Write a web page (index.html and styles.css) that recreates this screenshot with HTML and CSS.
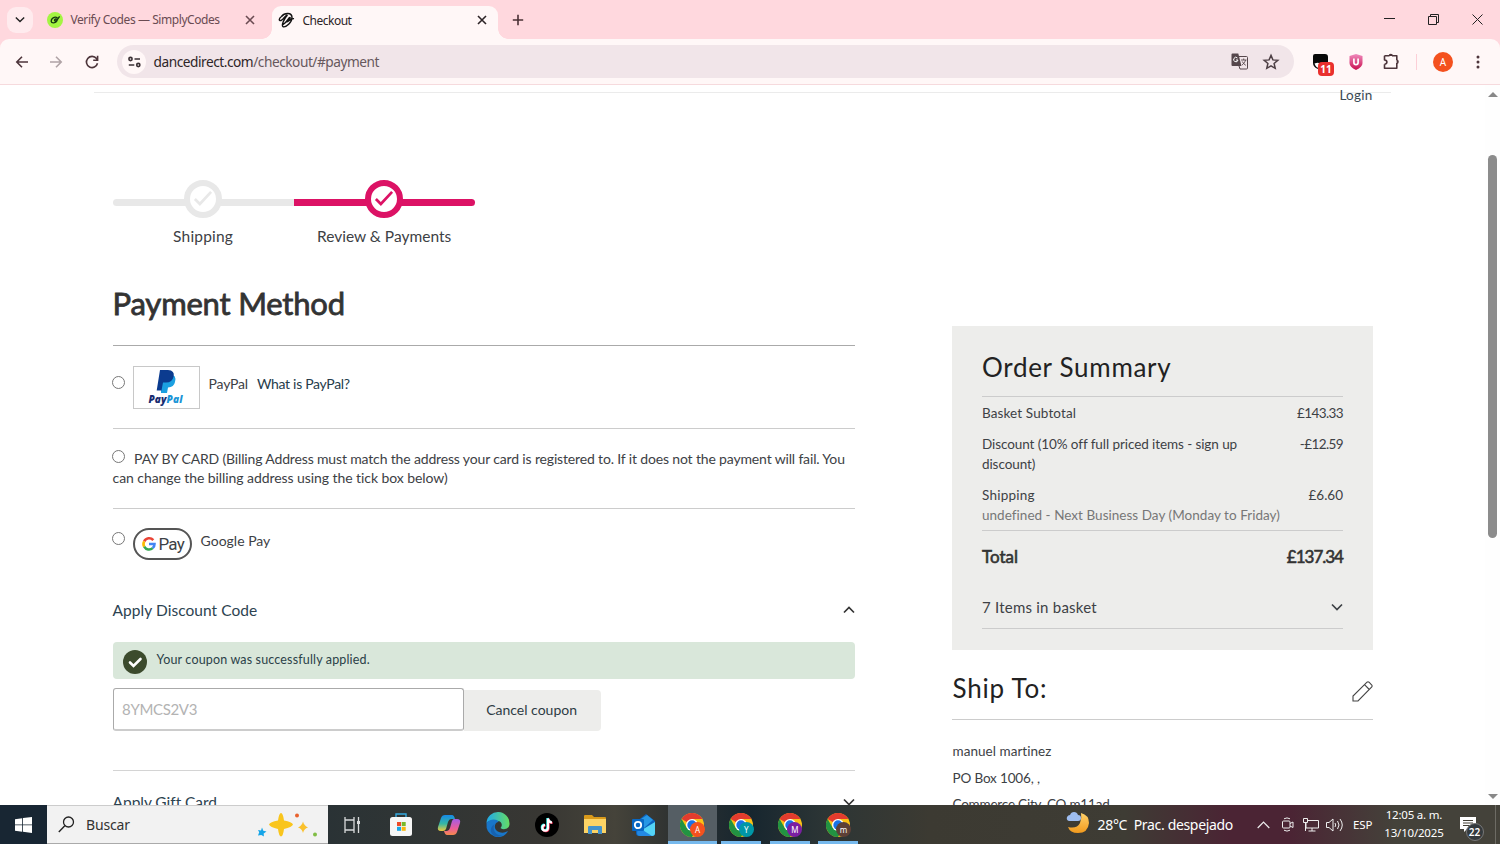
FILE: index.html
```html
<!DOCTYPE html>
<html lang="en">
<head>
<meta charset="utf-8">
<title>Checkout</title>
<link rel="stylesheet" href="styles.css">
</head>
<body>
<svg class="defs" width="0" height="0">
  <symbol id="chrome" viewBox="0 0 24 24">
    <circle cx="12" cy="12" r="12" fill="#fbc116"/>
    <path d="M12 12 1.6 6A12 12 0 0 1 22.4 6H12z" fill="#e33b2e"/>
    <path d="M1.6 6A12 12 0 0 0 12 24l5.2-9L12 12 6.8 15z" fill="#229342"/>
    <circle cx="12" cy="12" r="6" fill="#fff"/>
    <circle cx="12" cy="12" r="4.7" fill="#1a73e8"/>
  </symbol>
  <symbol id="close" viewBox="0 0 10 10"><path d="M1 1 9 9M9 1 1 9" fill="none" stroke="currentColor" stroke-width="1.6"/></symbol>
  <symbol id="down" viewBox="0 0 12 8"><path d="M1 1.5 6 6.5 11 1.5" fill="none" stroke="currentColor" stroke-width="1.7"/></symbol>
</svg>

<header class="tabs">
  <div class="tab-search"><svg width="10" height="7"><use href="#down"/></svg></div>
  <div class="tab tab-idle">
    <svg width="16" height="16" viewBox="0 0 16 16"><circle cx="8" cy="8" r="8" fill="#a4f542"/><path d="M10.500 5.800C7.500 4 4 6.500 4.200 9.200c.2 2.400 4.600 2.200 5.800-.5.600-1.700-1.600-2.200-2.400-.8-.5 1.300 1.400 1.500 2.400.3L12.600 4.400" fill="none" stroke="#173a12" stroke-width="1.400"/></svg>
    <span class="tab-title codes">Verify Codes — SimplyCodes</span>
    <svg class="tab-x" width="10" height="10"><use href="#close"/></svg>
  </div>
  <div class="tab tab-active">
    <svg width="17" height="17" viewBox="0 0 17 17"><path d="M3.500 4.500C6.500.5 14 .2 14 5.500c0 5-6 10-8.800 9.300C2.800 14 6 6.500 9.500 3M3.500 4.500C.5 6.500.8 9.200 3 8.500c3-1 3.500-5 6.500-5.500M5 12.500c4-1.500 5.500-7.500 7-7 1 1-1.500 3.500-4.500 4.500 3.500.5 5-4 8.500-3.300" fill="none" stroke="#111" stroke-width="1.400"/></svg>
    <span class="tab-title">Checkout</span>
    <svg class="tab-x" width="10" height="10"><use href="#close"/></svg>
  </div>
  <svg class="new-tab" width="12" height="12" viewBox="0 0 12 12"><path d="M6 .8v10.400M.8 6h10.400" stroke="#4a3035" stroke-width="1.600"/></svg>
  <div class="win">
    <svg width="11" height="11" viewBox="0 0 11 11"><path d="M0 4.500h11" stroke="#222"/></svg>
    <svg width="11" height="11" viewBox="0 0 11 11"><path d="M.5 2.500h8v8h-8zM2.500 2.500v-2h8v8h-2" fill="none" stroke="#222"/></svg>
    <svg width="11" height="11" viewBox="0 0 11 11"><path d="M.5.5l10 10M10.500.5l-10 10" stroke="#222"/></svg>
  </div>
</header>

<div class="toolbar-wrap">
<nav class="toolbar">
  <svg class="nav" width="14" height="14" viewBox="0 0 14 14"><path d="M13 7H2M7 1.800 1.800 7 7 12.200" fill="none" stroke="#4d353b" stroke-width="1.600"/></svg>
  <svg class="nav fwd" width="14" height="14" viewBox="0 0 14 14"><path d="M1 7h11M7 1.800 12.200 7 7 12.200" fill="none" stroke="#b0a3a6" stroke-width="1.600"/></svg>
  <svg class="nav reload" width="14" height="14" viewBox="0 0 14 14"><path d="M12.500 8.300A5.600 5.600 0 1 1 11.500 3.600L12.500 5M12.600.8V5.200H8.200" fill="none" stroke="#4d353b" stroke-width="1.600"/></svg>
  <div class="omni">
    <span class="site"><svg width="13" height="12" viewBox="0 0 13 12"><g fill="none" stroke="#3a3034" stroke-width="1.600"><circle cx="2.500" cy="3" r="1.600"/><path d="M6.500 3H12M.8 9h5.500"/><circle cx="10.300" cy="9" r="1.600"/></g></svg></span>
    <span class="url"><b>dancedirect.com</b>/checkout/#payment</span>
    <svg class="translate" width="17" height="17" viewBox="0 0 17 17"><path d="M1.500.5h5.800l3.200 12.500h-9a1 1 0 0 1-1-1V1.500a1 1 0 0 1 1-1z" fill="#56474c"/><path d="M8 3.500h7.500a1 1 0 0 1 1 1V15a1 1 0 0 1-1 1H9l-1-3" fill="none" stroke="#56474c"/><path d="M10 7h5.500M12.700 5.500V7M14.500 7c-.4 2-2 4-3.500 5M11.300 8.500c.7 1.700 2 3 3.500 3.800" fill="none" stroke="#56474c" stroke-width=".9"/><path d="M6.400 5A2.200 2.200 0 1 0 7 7H5" fill="none" stroke="#fff"/></svg>
    <svg class="star" width="16" height="16" viewBox="0 0 16 16"><path d="M8 1.400 9.900 5.900l4.900.4-3.700 3.200 1.100 4.800L8 11.800l-4.200 2.500 1.100-4.800L1.200 6.300l4.900-.4z" fill="none" stroke="#4d3f44" stroke-width="1.500"/></svg>
  </div>
  <div class="ext"><svg width="17" height="16" viewBox="0 0 17 16"><path d="M3 0h10q3 0 3 3v6H7L6 15Q1 13 1 9V2Q1 0 3 0z" fill="#090909"/><path d="M2.500 9.500q4-1.500 5 0V14Q4 14 2.500 9.500z" fill="#fff"/></svg><span class="count">11</span></div>
  <svg class="shield" width="14" height="16" viewBox="0 0 14 16"><defs><linearGradient id="sg" x2="0" y2="1"><stop stop-color="#f08abd"/><stop offset="1" stop-color="#c9104f"/></linearGradient></defs><path d="M7 0l6.500 2v7q0 4-6.500 7Q.5 13 .5 9V2z" fill="url(#sg)"/><path d="M4.900 4.500v4q0 2.200 2.100 2.200t2.100-2.200v-4" fill="none" stroke="#fff" stroke-width="1.700"/></svg>
  <svg class="puzzle" width="17" height="17" viewBox="0 0 17 17"><path d="M1.500 2.800h5M9 2.800h4.800v4.500M13.800 10v5.200H1.500v-4M1.500 2.800V7c3.200.2 3.200 4 0 4.200" fill="none" stroke="#4d353b" stroke-width="1.600" stroke-linejoin="round"/><path d="M5.600 3a2.200 2.200 0 0 1 4.400 0zM13.600 6.600a2.200 2.200 0 0 1 0 4.400z" fill="#4d353b"/></svg>
  <i class="sep"></i>
  <span class="avatar">A</span>
  <svg class="menu" width="4" height="14" viewBox="0 0 4 14"><g fill="#4d353b"><circle cx="2" cy="2" r="1.500"/><circle cx="2" cy="7" r="1.500"/><circle cx="2" cy="12" r="1.500"/></g></svg>
</nav>
</div>

<div class="viewport">
  <div class="page">
    <div class="login-row"><a class="login">Login</a></div>
    <div class="cols">
      <main class="left">
        <div class="steps">
          <div class="step step-done"><div class="bar"><span class="ring"><svg width="24" height="20" viewBox="0 0 24 20"><path d="M3 10 8.500 15.500 21 2" fill="none" stroke="currentColor" stroke-width="3"/></svg></span></div><span class="step-name shipping">Shipping</span></div>
          <div class="step step-now"><div class="bar"><span class="ring"><svg width="24" height="20" viewBox="0 0 24 20"><path d="M3 10 8.500 15.500 21 2" fill="none" stroke="currentColor" stroke-width="3"/></svg></span></div><span class="step-name">Review &amp; Payments</span></div>
        </div>
        <h1 class="title">Payment Method</h1>
        <section class="method paypal">
          <i class="radio"></i>
          <span class="pp-card"><svg width="64" height="41" viewBox="0 0 64 41"><path d="M27 7h9q7 1 5 8-1 5-7 5.500l-1 5.500h-6z" fill="#1ba0e1"/><path d="M26 3h8q7 .5 5.600 6.500-1.200 6-7.600 6h-3l-1.500 8h-4.800z" fill="#0b3b8f"/><text x="14.500" y="36" class="pp-word" fill="#172c70" textLength="18">Pay</text><text x="32.500" y="36" class="pp-word" fill="#1a94d6" textLength="16">Pal</text></svg></span>
          <span class="pp-name">PayPal</span><a class="pp-what">What is PayPal?</a>
        </section>
        <section class="method card">
          <p class="card-line one"><i class="radio"></i><span>PAY BY CARD (Billing Address must match the address your card is registered to. If it does not the payment will fail. You</span></p>
          <p class="card-line two">can change the billing address using the tick box below)</p>
        </section>
        <section class="method gpay">
          <i class="radio"></i>
          <span class="g-card"><svg width="14" height="14" viewBox="0 0 14 14"><g fill="none" stroke-width="2.600"><path d="M11.300 3.200A5.500 5.500 0 0 0 2.200 4.300" stroke="#ea4335"/><path d="M2.200 4.300a5.500 5.500 0 0 0 0 5.400" stroke="#fbbc04"/><path d="M2.200 9.700a5.500 5.500 0 0 0 8.500 1.400" stroke="#34a853"/><path d="M10.700 11.100A5.500 5.500 0 0 0 12.500 7H7" stroke="#4285f4"/></g></svg><span>Pay</span></span>
          <span class="g-name">Google Pay</span>
        </section>
        <div class="fold"><span>Apply Discount Code</span><svg class="up" width="12" height="8"><use href="#down"/></svg></div>
        <div class="alert"><svg width="24" height="24" viewBox="0 0 24 24"><circle cx="12" cy="12" r="12" fill="#3c4b2d"/><path d="M7 12.500 10.500 16 17.500 9" fill="none" stroke="#fff" stroke-width="2.600" stroke-linecap="round"/></svg><span>Your coupon was successfully applied.</span></div>
        <div class="coupon"><div class="field"><span>8YMCS2V3</span></div><div class="cancel"><span>Cancel coupon</span></div></div>
        <div class="fold gift"><span>Apply Gift Card</span><svg width="12" height="8"><use href="#down"/></svg></div>
      </main>
      <aside class="right">
        <div class="summary">
          <h2 class="sum-title"><span>Order Summary</span></h2>
          <div class="row r1"><span class="l1">Basket Subtotal</span><span class="price">£143.33</span></div>
          <div class="row r2"><span class="l2">Discount (10% off full priced items - sign up<br>discount)</span><span class="price">-£12.59</span></div>
          <div class="row r3"><span><span class="l3">Shipping</span><br><span class="dim">undefined - Next Business Day (Monday to Friday)</span></span><span class="v3">£6.60</span></div>
          <div class="row total"><span class="l4">Total</span><span class="v4">£137.34</span></div>
          <div class="row items"><span>7 Items in basket</span><svg width="12" height="8"><use href="#down"/></svg></div>
        </div>
        <div class="ship"><h2 class="ship-title">Ship To:</h2><svg width="21" height="21" viewBox="0 0 21 21"><path d="M1 20v-5L15 1.200q1-.8 2 0l2.800 2.800q.8 1 0 2L6 20zM12.500 3.700l4.800 4.800" fill="none" stroke="#444" stroke-width="1.100"/></svg></div>
        <div class="address"><span class="a1">manuel martinez</span><span class="a2">PO Box 1006, ,</span><span class="a3">Commerce City, CO m11ad</span></div>
      </aside>
    </div>
  </div>
  <div class="scroll"><i class="arr arr-up"></i><i class="thumb"></i><i class="arr arr-down"></i></div>
</div>

<footer class="taskbar">
  <div class="start"><svg width="17" height="16" viewBox="0 0 17 16"><path d="M0 2.200 7.200 1.200v6.300H0zM8 1.100 17 0v7.500H8zM0 8.300h7.200v6.400L0 13.700zM8 8.300h9V16L8 14.800z" fill="#fff"/></svg></div>
  <div class="search">
    <svg width="17" height="17" viewBox="0 0 17 17"><circle cx="10.500" cy="6" r="5" fill="none" stroke="#222" stroke-width="1.300"/><path d="M6.800 9.800.8 16" stroke="#222" stroke-width="1.400"/></svg>
    <span class="buscar">Buscar</span>
    <svg class="sparkle" width="62" height="26" viewBox="0 0 62 26"><path d="M25 1q2 0 3 7.500 8 1.500 9 4-1 2.500-9 4.500-1 7.500-3 7.500t-3-7.500q-8-2-9-4.500 1-2.500 9-4Q23 1 25 1z" fill="#f9c51d"/><path d="M47 9.500q1 4 5 6-4 1-5 5.500-1-4.500-5-5.500 4-2 5-6z" fill="#fac12c"/><path d="M6 15.500l1.300 3.200 3.200.8-2.800 2 .2 3-2.600-1.500-3.300.5 1.200-3.200L2 18l3 .4z" fill="#16a5e8"/><circle cx="41" cy="3.500" r="2" fill="#e8612d"/><circle cx="59" cy="22.500" r="2" fill="#80bd45"/></svg>
  </div>
  <div class="app"><svg width="17" height="16" viewBox="0 0 17 16"><g fill="none" stroke="#d8dadb" stroke-width="1.300"><path d="M1 0v3h9V0M1 16v-3h9v3M1 3v10M10 3v10M14.500 0v16"/></g><path d="M13 4h3v3h-3z" fill="#d8dadb"/></svg></div>
  <div class="app"><svg width="24" height="24" viewBox="0 0 24 24"><path d="M7 5V1h10v4" fill="none" stroke="#35a9df" stroke-width="1.400"/><rect x="1" y="4" width="22" height="19" rx="2.500" fill="#f6f6f6"/><path d="M8 9h4v4H8z" fill="#ed4b28"/><path d="M12.700 9h4v4h-4z" fill="#79b929"/><path d="M8 13.800h4v4H8z" fill="#18a6e6"/><path d="M12.700 13.800h4v4h-4z" fill="#f7b80e"/></svg></div>
  <div class="app"><svg width="24" height="24" viewBox="0 0 24 24"><defs><linearGradient id="ca" x2="0" y2="1"><stop stop-color="#1689e8"/><stop offset=".55" stop-color="#35b7a4"/><stop offset="1" stop-color="#efc93c"/></linearGradient><linearGradient id="cb" x2="0" y2="1"><stop stop-color="#a45be5"/><stop offset=".6" stop-color="#ec5e98"/><stop offset="1" stop-color="#f58a4b"/></linearGradient></defs><path d="M8 2h7q2 0 3 4h-4q-2 0-3 3l-2 7q-1 2-3 2H4q-4 0-3-4l3-9q1-3 4-3z" fill="url(#ca)"/><path d="M17 6h3q4 0 3 4l-3 9q-1 3-4 3H10q-2 0-3-4h3q2 0 3-3l2-7q1-2 2-2z" fill="url(#cb)"/></svg></div>
  <div class="app"><svg width="24" height="24" viewBox="0 0 24 24"><defs><linearGradient id="ea"><stop stop-color="#1fa9ed"/><stop offset="1" stop-color="#65dc63"/></linearGradient></defs><path d="M.5 10A11.500 11.500 0 0 1 23.500 11c0 5-6 6.500-9 4 2-2 2-6-2-7-5-1-10-1-12 2z" fill="url(#ea)"/><path d="M.5 10C3 6 11 5 12.800 9 8 9 7 17 13 19c4 1.500 7 0 9-1-3 6-9 7-13.500 5.400Q-.5 20 .5 10z" fill="#1976c9"/><path d="M8.500 11c-3 6 2 12.500 8.500 11.500Q8 26 5 19q-1-5 3.500-8z" fill="#1762b1"/></svg></div>
  <div class="app"><svg width="24" height="24" viewBox="0 0 24 24"><circle cx="12" cy="12" r="12" fill="#000"/><g fill="none" stroke-width="2.200"><path d="M12.400 5v9.500a2.800 2.800 0 1 1-3-3M12.600 5q.5 3.800 4 4" stroke="#25f4ee"/><path d="M13.600 6v9.500a2.800 2.800 0 1 1-3-3M13.600 6q.5 3.800 4 4" stroke="#fe2c55"/><path d="M13 5.500V15a2.800 2.800 0 1 1-3-3M13 5.500q.5 3.800 4 4" stroke="#fff"/></g></svg></div>
  <div class="app"><svg width="24" height="22" viewBox="0 0 24 22"><path d="M1 2q0-1 1-1h7l2 2h11q1 0 1 1v14H1z" fill="#d99a1b"/><path d="M1 5h22v14H1z" fill="#fcd365"/><path d="M5 20v-7q0-1 1-1h12q1 0 1 1v7h-4v-4H9v4z" fill="#4392cb"/></svg></div>
  <div class="app"><svg width="24" height="24" viewBox="0 0 24 24"><path d="M4 9 14 1l9 7v12q0 3-3 3H7q-3 0-3-3z" fill="#0c62bd"/><path d="M9 6 15 2l6 5-9 8z" fill="#2697e5"/><path d="M8 18 23 9v11q0 3-3 3H8z" fill="#54d4f6"/><path d="M6 14 20 23H8q-3 0-3-3z" fill="#2389e3"/><rect y="6" width="12" height="12" rx="1" fill="#0867c3"/><circle cx="6" cy="12" r="3.200" fill="none" stroke="#fff" stroke-width="1.800"/></svg></div>
  <div class="app on"><svg width="24" height="24"><use href="#chrome"/></svg><span class="who orange">A</span></div>
  <div class="app open"><svg width="24" height="24"><use href="#chrome"/></svg><span class="who teal">Y</span></div>
  <div class="app open"><svg width="24" height="24"><use href="#chrome"/></svg><span class="who violet">M</span></div>
  <div class="app open"><svg width="24" height="24"><use href="#chrome"/></svg><span class="who brown">m</span></div>
  <div class="tray">
    <svg class="moon" width="24" height="24" viewBox="0 0 24 24"><defs><linearGradient id="mg" x2="0" y2="1"><stop stop-color="#ffd16a"/><stop offset="1" stop-color="#f29a1d"/></linearGradient></defs><path d="M15 2q8 2 8 10-1 10-11 10-8 0-10-6 9 2 12-4 2-5 1-10z" fill="url(#mg)"/><path d="M3 10q-3-1-2-4 1-2 3-2 1-3 4-3t4 3q3 0 3 3t-3 3z" fill="#9ebdf0"/></svg>
    <span class="temp">28°C&nbsp; Prac. despejado</span>
    <svg class="caret" width="13" height="8" viewBox="0 0 13 8"><path d="M.7 7 6.500 1.200 12.300 7" fill="none" stroke="#eee" stroke-width="1.200"/></svg>
    <svg class="meet" width="12" height="15" viewBox="0 0 12 15"><g fill="none" stroke="#eee"><rect x=".5" y="4" width="7.500" height="7" rx="1"/><path d="M8 6.500 11 5v5.500L8 9M2 1.800Q5 0 8 1.800M2 13.200q3 1.800 6 0"/></g></svg>
    <svg class="net" width="16" height="14" viewBox="0 0 16 14"><path d="M5 2.500h10.500v7.500H3V5M9 10v3M5.500 13h7M.5.500h4v4h-4zM2.500 4.500V13" fill="none" stroke="#eee"/></svg>
    <svg class="vol" width="18" height="14" viewBox="0 0 18 14"><g fill="none" stroke="#eee"><path d="M.5 4.500H3L7 1v12L3 9.500H.5zM9 5q1.500 2 0 4M11.500 3q3 4 0 8M14 1q4.500 6 0 12"/></g></svg>
    <span class="esp">ESP</span>
    <span class="clock"><span class="time">12:05 a. m.</span><span class="date">13/10/2025</span></span>
    <span class="note"><svg width="16" height="16" viewBox="0 0 16 16"><path d="M0 0h16v12H7l-3 3v-3H0z" fill="#fff"/><path d="M3 3.500h10M3 6h10M3 8.500h7" stroke="#444136"/></svg><span class="badge">22</span></span>
    <i class="peek"></i>
  </div>
</footer>
</body>
</html>
```

FILE: styles.css
```css
* { box-sizing: border-box; }
body { margin: 0; width: 1500px; height: 844px; overflow: hidden; background: #fff; font-family: Lato, "Open Sans", sans-serif; font-variant-ligatures: none; color: #3d4145; display: flex; flex-direction: column; }
svg { display: block; flex: none; overflow: visible; }
.defs { position: absolute; }
h1, h2, p { margin: 0; font-weight: 400; }
span, a { white-space: nowrap; }

/* browser window */
.tabs { height: 39px; flex: none; background: #ffd8de; display: flex; align-items: center; padding-left: 7px; font-family: "Noto Sans", sans-serif; font-size: 12px; }
.tab-search { width: 26px; height: 26px; border-radius: 9px; background: #ffebee; display: flex; align-items: center; justify-content: center; color: #222; }
.tab { display: flex; align-items: center; }
.tab-idle { width: 239px; padding: 0 17px 0 14px; color: #6a4b52; }
.tab-active { position: relative; align-self: flex-end; width: 226px; height: 33px; padding: 0 11px 5px 6px; border-radius: 9px 9px 0 0; background: #fff7f7; color: #2d2427; }
.tab-active::before, .tab-active::after { content: ""; position: absolute; bottom: 0; width: 10px; height: 10px; }
.tab-active::before { left: -10px; background: radial-gradient(circle at 0 0, transparent 9.500px, #fff7f7 10px); }
.tab-active::after { right: -10px; background: radial-gradient(circle at 100% 0, transparent 9.500px, #fff7f7 10px); }
.tab-title { margin-left: 7.500px; letter-spacing: -.5px; }
.codes { letter-spacing: -.43px; }
.tab-x { margin-left: auto; }
.new-tab { margin-left: 14px; }
.win { margin-left: auto; display: flex; gap: 33px; padding-right: 17px; }
.toolbar-wrap { background: #ffd8de; flex: none; }
.toolbar { height: 46px; background: #fff7f7; border-radius: 9px 9px 0 0; border-bottom: 1px solid #f6dadd; display: flex; align-items: center; padding-left: 15px; font-family: "Noto Sans", sans-serif; }
.fwd { margin-left: 20px; }
.reload { margin-left: 22px; }
.omni { margin-left: 18px; width: 1177px; height: 33px; border-radius: 17px; background: #f1e5e9; display: flex; align-items: center; padding-left: 5px; }
.site { width: 24px; height: 24px; border-radius: 50%; background: #fff7f7; display: flex; align-items: center; justify-content: center; }
.url { margin-left: 7.500px; font-size: 13.700px; color: #67585d; letter-spacing: -.47px; }
.url b { font-weight: 400; color: #2e2528; }
.translate { margin-left: auto; }
.star { margin: 0 15px; }
.ext { position: relative; width: 22px; height: 16px; margin-left: 18px; }
.count { position: absolute; left: 6px; top: 8px; width: 16px; height: 14px; border-radius: 4px; background: #e9302e; color: #fff; font: bold 10px/14px "Noto Sans", sans-serif; text-align: center; }
.shield { margin-left: 15px; }
.puzzle { margin-left: 20px; }
.sep { width: 1px; height: 16px; background: #fccfd7; margin-left: 16px; }
.avatar { margin-left: 16px; width: 20px; height: 20px; border-radius: 50%; background: #f4511e; color: #fff; font-size: 10px; line-height: 20px; text-align: center; }
.menu { margin-left: 23px; }

/* checkout page */
.viewport { height: 720px; flex: none; display: flex; overflow: hidden; }
.page { width: 1485px; }
.login-row { margin: 7px 0 0 94px; width: 1297px; height: 84px; border-top: 1px solid #ebebeb; padding-right: 18.500px; display: flex; justify-content: flex-end; }
.login { font-size: 13.500px; line-height: 18px; height: 18px; margin-top: -7px; color: #3b4a54; letter-spacing: .25px; }
.cols { display: flex; padding-left: 112.600px; }
.left { width: 742px; margin-right: 97.400px; }
.steps { display: flex; width: 362px; height: 105px; padding-top: 23px; }
.step { flex: 1; display: flex; flex-direction: column; align-items: center; font-size: 15.500px; }
.bar { width: 100%; height: 7px; display: flex; align-items: center; justify-content: center; background: currentColor; }
.step-done .bar { color: #e8e8e8; border-radius: 4px 0 0 4px; }
.step-now .bar { color: #dc1265; border-radius: 0 4px 4px 0; }
.ring { flex: none; width: 38px; height: 38px; margin-top: -7px; border: 6px solid currentColor; border-radius: 50%; background: #fff; display: flex; align-items: center; justify-content: center; }
.ring svg { width: 22px; height: 18px; }
.step-name { margin-top: 20px; line-height: 20px; }
.shipping { letter-spacing: .2px; }
.title { height: 73px; line-height: 62px; font-size: 31px; color: #333; -webkit-text-stroke: .8px #333; letter-spacing: -.2px; margin-top: -9px; }
.method { border-top: 1px solid #ccc; font-size: 14px; }
.radio { display: block; flex: none; width: 13px; height: 13px; border: 1px solid #777; border-radius: 50%; background: #fff; margin-left: -.4px; }
.paypal { height: 83px; display: flex; align-items: flex-start; border-color: #aaa; }
.paypal .radio { margin-top: 30px; }
.pp-card { width: 67px; height: 43px; border: 1px solid #c8c8c8; margin: 20px 0 0 8px; }
.pp-word { font: italic 800 10px "Open Sans", sans-serif; }
.pp-name, .pp-what { line-height: 20px; margin: 28px 0 0 8px; }
.pp-name { letter-spacing: -.2px; margin-left: 8.400px; }
.pp-what { color: #263c4b; margin-left: 9px; letter-spacing: -.3px; }
.card { height: 80px; padding-top: 20px; }
.card-line { height: 19px; line-height: 19px; white-space: nowrap; }
.one { display: flex; letter-spacing: -.155px; }
.two { letter-spacing: -.07px; }
.one .radio { margin: 1px 8.900px 0 -.4px; }
.gpay { display: flex; align-items: flex-start; height: 86px; }
.gpay .radio { margin-top: 23px; }
.g-card { width: 59px; height: 32px; border: 2px solid #555; border-radius: 16px; margin: 19px 0 0 8px; display: flex; align-items: center; justify-content: center; gap: 3px; font: 400 17px Roboto, sans-serif; letter-spacing: -.8px; }
.g-name { line-height: 20px; margin: 22px 0 0 8.400px; }
.fold { height: 48px; display: flex; justify-content: space-between; align-items: flex-start; color: #2d4351; font-size: 15.500px; line-height: 20px; padding-top: 6px; letter-spacing: .05px; }
.fold svg { margin-top: 6px; color: #333; }
.up { transform: rotate(180deg); }
.alert { height: 37px; background: #d9e7da; border-radius: 4px; display: flex; padding: 8px 10px; gap: 10px; font-size: 12.500px; color: #2b4148; line-height: 19px; letter-spacing: .16px; }
.coupon { display: flex; height: 43px; margin: 9px 0 39px; align-items: flex-end; }
.field { width: 351px; height: 43px; border: 1px solid #aaa; border-bottom: 2px solid #ccc; border-radius: 3px; padding-left: 8.500px; line-height: 41px; color: #b3b3b3; font-size: 15px; letter-spacing: -.35px; }
.cancel { width: 137px; height: 41px; background: #ededeb; border-radius: 0 4px 4px 0; line-height: 39px; text-align: center; padding-right: 1px; font-size: 14px; color: #2d3c44; }
.gift { border-top: 1px solid #d4d4d4; padding-top: 21px; letter-spacing: -.05px; }
.right { width: 421px; padding-top: 150px; }
.summary { height: 324px; background: #ededeb; padding: 0 30px; font-size: 13.500px; line-height: 20px; }
.sum-title, .ship-title { font-size: 26px; color: #222; letter-spacing: .7px; }
.sum-title { height: 71px; line-height: 82px; border-bottom: 1px solid #ccc; }
.row { display: flex; justify-content: space-between; }
.r1 { padding-top: 6px; height: 37px; }
.l1 { letter-spacing: .12px; }
.l2 { letter-spacing: -.08px; }
.l3 { letter-spacing: .25px; }
.price { letter-spacing: -.6px; }
.r2 { height: 51px; }
.r3 { height: 46px; border-bottom: 1px solid #ccc; }
.dim { color: #777; letter-spacing: .03px; }
.total { font-size: 17px; color: #333; -webkit-text-stroke: .6px #333; line-height: 20px; padding-top: 16px; height: 66px; }
.v4 { letter-spacing: -1px; }
.items { font-size: 15px; letter-spacing: .23px; line-height: 20px; height: 32px; border-bottom: 1px solid #ccc; }
.items svg { margin-top: 6px; }
.ship { height: 70px; border-bottom: 1px solid #ccc; display: flex; justify-content: space-between; }
.ship-title { line-height: 77px; padding-left: .5px; letter-spacing: .8px; }
.ship svg { margin-top: 31px; }
.address { display: flex; flex-direction: column; align-items: flex-start; padding: 18px 0 0 .5px; font-size: 13.500px; line-height: 27px; }
.a1 { letter-spacing: .05px; }
.a2 { letter-spacing: -.15px; }
.a3 { letter-spacing: -.2px; line-height: 25px; }
.scroll { width: 15px; background: #fefefe; padding-top: 7px; display: flex; flex-direction: column; align-items: center; }
.arr { border: 5px solid transparent; border-top: 0; border-bottom: 5px solid #888; }
.arr-down { border-bottom: 0; border-top: 5px solid #888; margin-top: 256px; }
.thumb { width: 9px; height: 383px; margin-top: 58px; border-radius: 4.500px; background: #8c8c8c; }

/* taskbar */
.taskbar { height: 39px; flex: none; display: flex; background: linear-gradient(90deg, #182633 0, #182633 3%, #2b3335 23%, #383733 36%, #45433a 41%, #2d3131 45%, #17262f 50%, #2c3535 55%, #3c3a32 62%, #3e3c34 75%, #4b2434 82%, #4b2434 86%, #44423a 93%, #44423a 100%); font-family: "Noto Sans", sans-serif; color: #fff; }
.start { width: 47px; display: flex; align-items: center; justify-content: center; }
.search { width: 281px; background: #f2f2f2; border-top: 1px solid #ccc; border-bottom: 1px solid #aaa; display: flex; align-items: center; padding: 0 10px 0 11px; color: #333; }
.buscar { margin-left: 11px; font-size: 14px; letter-spacing: -.15px; }
.sparkle { margin-left: auto; }
.app { position: relative; width: 48.600px; display: flex; align-items: center; justify-content: center; flex: none; }
.on { background: #555e64; border-bottom: 3px solid #76b9ed; padding-top: 3px; }
.open { background: linear-gradient(#76b9ed, #76b9ed) center bottom / 40px 3px no-repeat; }
.who { position: absolute; left: 22px; top: 17px; width: 15px; height: 15px; border-radius: 50%; font-size: 8px; line-height: 15px; text-align: center; }
.orange { background: #f4511e; }
.teal { background: #0097a7; }
.violet { background: #7b1fa2; }
.brown { background: #5d4037; }
.tray { display: flex; align-items: center; margin-left: 203px; font-size: 14px; flex: 1; }
.moon { margin-top: -3px; }
.temp { margin-left: 8px; letter-spacing: -.33px; }
.caret { margin-left: 24px; }
.meet { margin-left: 12px; }
.net { margin-left: 9px; }
.vol { margin-left: 7px; }
.esp { font-size: 11.500px; margin-left: 9px; letter-spacing: -.1px; }
.clock { margin-left: 12px; display: flex; flex-direction: column; align-items: center; font-size: 11.500px; line-height: 18px; letter-spacing: -.2px; margin-top: -1px; }
.note { position: relative; margin-left: 16px; }
.badge { position: absolute; left: 6px; top: 6px; width: 18px; height: 18px; border-radius: 50%; background: #343a3d; border: 1px solid #777; font-size: 10px; font-weight: 600; line-height: 16px; text-align: center; }
.peek { margin-left: auto; margin-right: 4px; width: 1px; height: 39px; background: #6d6b64; }
```
